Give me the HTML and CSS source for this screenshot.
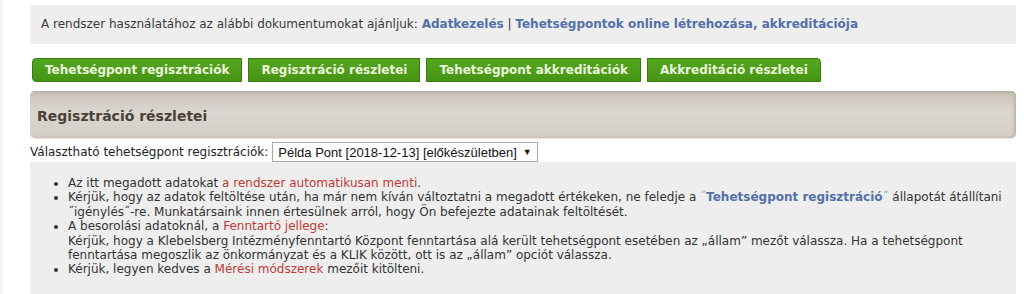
FILE: index.html
```html
<!DOCTYPE html>
<html lang="hu">
<head>
<meta charset="utf-8">
<title>Regisztráció részletei</title>
<link rel="stylesheet" href="styles.css">
</head>
<body>
<div class="page">
  <div class="docs">A rendszer használatához az alábbi dokumentumokat ajánljuk: <a href="#">Adatkezelés</a> | <a href="#">Tehetségpontok online létrehozása, akkreditációja</a></div>
  <nav class="tabs">
    <a class="tab first" href="#">Tehetségpont regisztrációk</a>
    <a class="tab" href="#">Regisztráció részletei</a>
    <a class="tab" href="#">Tehetségpont akkreditációk</a>
    <a class="tab last" href="#">Akkreditáció részletei</a>
  </nav>
  <div class="header"><h1>Regisztráció részletei</h1></div>
  <div class="chooser">
    <span class="label">Választható tehetségpont regisztrációk:</span>
    <span class="select">Példa Pont [2018-12-13] [előkészületben] <span class="arrow">▼</span></span>
  </div>
  <div class="content">
    <ul class="notes">
      <li>Az itt megadott adatokat <span class="red">a rendszer automatikusan menti</span>.</li>
      <li>Kérjük, hogy az adatok feltöltése után, ha már nem kíván változtatni a megadott értékeken, ne feledje a <span class="blue"><span class="q">˝</span><b>Tehetségpont regisztráció</b><span class="q">˝</span></span> állapotát átállítani ˝igénylés˝-re. Munkatársaink innen értesülnek arról, hogy Ön befejezte adatainak feltöltését.</li>
      <li>A besorolási adatoknál, a <span class="red">Fenntartó jellege</span>:<br>Kérjük, hogy a Klebelsberg Intézményfenntartó Központ fenntartása alá került tehetségpont esetében az „állam” mezőt válassza. Ha a tehetségpont fenntartása megoszlik az önkormányzat és a KLIK között, ott is az „állam” opciót válassza.</li>
      <li>Kérjük, legyen kedves a <span class="red">Mérési módszerek</span> mezőit kitölteni.</li>
    </ul>
  </div>
</div>
</body>
</html>
```
FILE: styles.css
```css
html, body {
  margin: 0;
  padding: 0;
  background: #ffffff;
}
body {
  font-family: "DejaVu Sans", Verdana, sans-serif;
  font-size: 12px;
  color: #333333;
  border-left: 3px solid #f4f4f4;
}
.page {
  padding: 5px 8px 0 27px;
}
.docs {
  background: #eeeeee;
  height: 39px;
  line-height: 39px;
  padding-left: 11px;
  font-size: 12px;
  color: #3a3a3a;
}
.docs a {
  color: #5370a8;
  font-weight: bold;
  text-decoration: none;
}
.tabs {
  display: flex;
  gap: 6px;
  margin: 14px 0 0 2px;
}
.tab {
  display: block;
  height: 22px;
  line-height: 22px;
  padding: 0 12px;
  background: linear-gradient(#54a620, #469414);
  border: 1px solid #3a7a10;
  color: #eaf6dc;
  font-weight: bold;
  font-size: 12px;
  text-decoration: none;
  white-space: nowrap;
}
.tab.first { border-radius: 4px 0 0 4px; }
.tab.last { border-radius: 0 4px 0 0; }
.header {
  margin-top: 9px;
  height: 47px;
  border-radius: 5px;
  background: linear-gradient(#bab3a9 0, #cbc5bd 4px, #dbd7d1 45%, #d3cec7 100%);
  box-shadow: inset -2px 0 3px #b9b2a8, 0 1px 1px #e9e6e2;
  display: flex;
  align-items: center;
}
.header h1 {
  margin: 0 0 0 7px;
  font-size: 14px;
  font-weight: bold;
  color: #4b4237;
  padding-top: 3px;
}
.chooser {
  display: flex;
  align-items: center;
  gap: 4px;
  height: 20px;
  margin-top: 4px;
  font-size: 12px;
  color: #222;
}
.select {
  display: inline-flex;
  align-items: center;
  gap: 6px;
  height: 18px;
  padding: 0 5px;
  border: 1px solid #a9a9a9;
  background: #fff;
  font-family: "Liberation Sans", Arial, sans-serif;
  font-size: 13px;
  color: #111;
}
.arrow {
  font-size: 9px;
}
.content {
  background: #eeeeee;
  height: 140px;
  padding-top: 14px;
  box-sizing: border-box;
}
.notes {
  margin: 0;
  padding: 0 6px 0 38px;
  line-height: 14.4px;
  font-size: 12px;
  color: #333;
}
.red { color: #c03a33; }
.blue { color: #5370a8; }
.q { color: #8aa0c8; }
```
